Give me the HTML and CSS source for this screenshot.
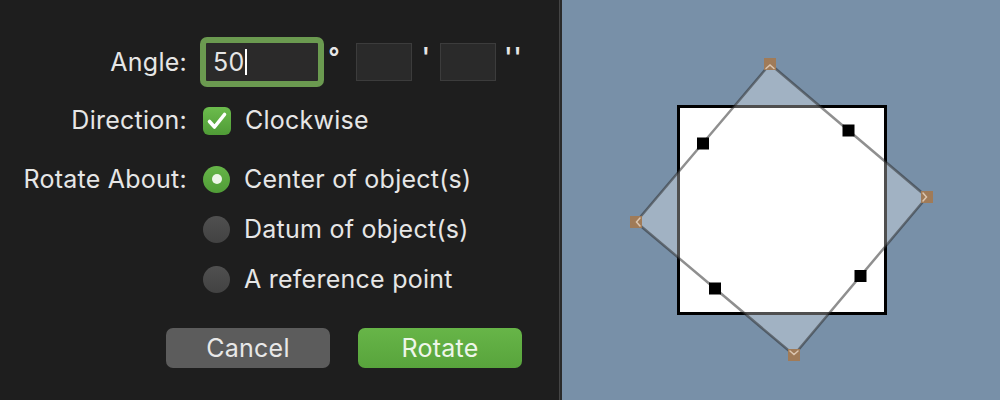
FILE: index.html
```html
<!DOCTYPE html>
<html lang="en">
<head>
<meta charset="utf-8">
<title>Rotate</title>
<link rel="stylesheet" href="styles.css">
</head>
<body>
<div class="app">
  <section class="dialog">
    <div class="row row-angle">
      <span class="lbl">Angle:</span>
      <div class="ctl">
        <div class="field focus"><span class="val">50</span><span class="caret"></span></div>
        <span class="unit deg">°</span>
        <div class="field small"></div>
        <span class="unit min">'</span>
        <div class="field small"></div>
        <span class="unit sec">''</span>
      </div>
    </div>
    <div class="row row-dir">
      <span class="lbl">Direction:</span>
      <div class="ctl">
        <svg class="check" viewBox="0 0 28 28" width="28" height="28">
          <defs>
            <linearGradient id="cg" x1="0" y1="0" x2="0" y2="1">
              <stop offset="0" stop-color="#6cbc4d"/>
              <stop offset="1" stop-color="#4f9b36"/>
            </linearGradient>
          </defs>
          <rect x="0" y="0" width="28" height="28" rx="6" fill="url(#cg)"/>
          <path d="M6.5 14.5 L11.5 20 L21.5 7.5" fill="none" stroke="#ffffff" stroke-width="3.6" stroke-linecap="round" stroke-linejoin="round"/>
        </svg>
        <span class="opt">Clockwise</span>
      </div>
    </div>
    <div class="row row-about">
      <span class="lbl">Rotate About:</span>
      <div class="ctl"><span class="radio on"></span><span class="opt">Center of object(s)</span></div>
    </div>
    <div class="row">
      <span class="lbl"></span>
      <div class="ctl"><span class="radio"></span><span class="opt">Datum of object(s)</span></div>
    </div>
    <div class="row">
      <span class="lbl"></span>
      <div class="ctl"><span class="radio"></span><span class="opt">A reference point</span></div>
    </div>
    <div class="buttons">
      <button class="btn cancel">Cancel</button>
      <button class="btn primary">Rotate</button>
    </div>
  </section>
  <section class="canvas">
    <svg class="stage" viewBox="0 0 438 400" width="438" height="400">
      <rect x="116.5" y="106.5" width="207" height="207" fill="#ffffff" stroke="#000000" stroke-width="3"/>
      <polygon points="208,64 365,197 232,355 74,222" fill="rgba(255,255,255,0.31)" stroke="rgba(40,40,40,0.52)" stroke-width="2.5"/>
      <g fill="#000000">
        <rect x="135" y="137.5" width="12" height="12"/>
        <rect x="280.5" y="124.5" width="12" height="12"/>
        <rect x="292.5" y="270" width="12" height="12"/>
        <rect x="147" y="282.5" width="12" height="12"/>
      </g>
      <g fill="#a07b58">
        <rect x="202" y="58" width="12" height="12"/>
        <rect x="359" y="191" width="12" height="12"/>
        <rect x="226" y="349" width="12" height="12"/>
        <rect x="68" y="216" width="12" height="12"/>
      </g>
      <g fill="none" stroke="#dcc6b0" stroke-width="1.5" stroke-linecap="round">
        <polyline points="204,68.5 208,65 212,68.5"/>
        <polyline points="361,193 364.5,197 361,201"/>
        <polyline points="228,351 232,354.5 236,351"/>
        <polyline points="78,218 74.5,222 78,226"/>
      </g>
    </svg>
  </section>
</div>
</body>
</html>
```

FILE: styles.css
```css
* {
  box-sizing: border-box;
}

html,
body {
  margin: 0;
  padding: 0;
}

body {
  width: 1000px;
  height: 400px;
  overflow: hidden;
  background: #1e1e1e;
  font-family: Inter, "Noto Sans", sans-serif;
  color: #e6e6e6;
  letter-spacing: 0.25px;
}

.app {
  display: flex;
  height: 400px;
}

.dialog {
  width: 560px;
  border-right: 1px solid #454545;
  padding-top: 37px;
  display: flex;
  flex-direction: column;
}

.row {
  display: grid;
  grid-template-columns: 187px auto;
  column-gap: 16px;
  align-items: center;
  height: 50px;
}

.row-dir {
  margin-top: 8px;
}

.row-about {
  margin-top: 9px;
}

.lbl {
  text-align: right;
  font-size: 25px;
  line-height: 30px;
}

.ctl {
  display: flex;
  align-items: center;
}

.field {
  background: #2a2a2a;
  border: 1px solid #3c3c3c;
}

.field.small {
  width: 56px;
  height: 38px;
}

.field.focus {
  width: 118px;
  height: 44px;
  border: 3px solid #6b9a50;
  box-shadow: 0 0 0 3px #6b9a50;
  border-radius: 4px;
  background: #2b2a2a;
  display: flex;
  align-items: center;
  padding-left: 7px;
  font-size: 25px;
}

.caret {
  width: 2px;
  height: 26px;
  background: #ffffff;
  margin-left: 1px;
}

.unit {
  font-size: 25px;
  font-weight: 600;
  text-align: center;
  align-self: flex-start;
  line-height: 30px;
  margin-top: 2px;
}

.deg {
  width: 20px;
  margin-left: 3px;
  margin-right: 12px;
}

.min {
  width: 16px;
  margin-left: 6px;
  margin-right: 6px;
}

.sec {
  width: 27px;
  margin-left: 4px;
  letter-spacing: 1px;
}

.check {
  display: block;
  margin-top: 1px;
}

.opt {
  font-size: 25px;
  line-height: 30px;
  margin-left: 14px;
}

.radio {
  width: 27px;
  height: 27px;
  border-radius: 50%;
  background: linear-gradient(#505050, #424242);
  display: flex;
  align-items: center;
  justify-content: center;
}

.radio.on {
  background: linear-gradient(#66b548, #509c37);
}

.radio.on::after {
  content: "";
  width: 10px;
  height: 10px;
  border-radius: 50%;
  background: #eef5e9;
}

.buttons {
  display: flex;
  gap: 28px;
  margin-top: 24px;
  margin-left: 166px;
}

.btn {
  width: 164px;
  height: 40px;
  border: none;
  border-radius: 7px;
  font-family: Inter, "Noto Sans", sans-serif;
  font-size: 25px;
  letter-spacing: 0.25px;
  color: #e8e8e8;
  padding: 0;
}

.btn.cancel {
  background: #5c5c5c;
}

.btn.primary {
  background: linear-gradient(#67b548, #58a43c);
  color: #eef6ea;
}

.canvas {
  flex: 1;
  border-left: 2px solid #2a2a2a;
  background: #7890a8;
}

.stage {
  display: block;
}
```
